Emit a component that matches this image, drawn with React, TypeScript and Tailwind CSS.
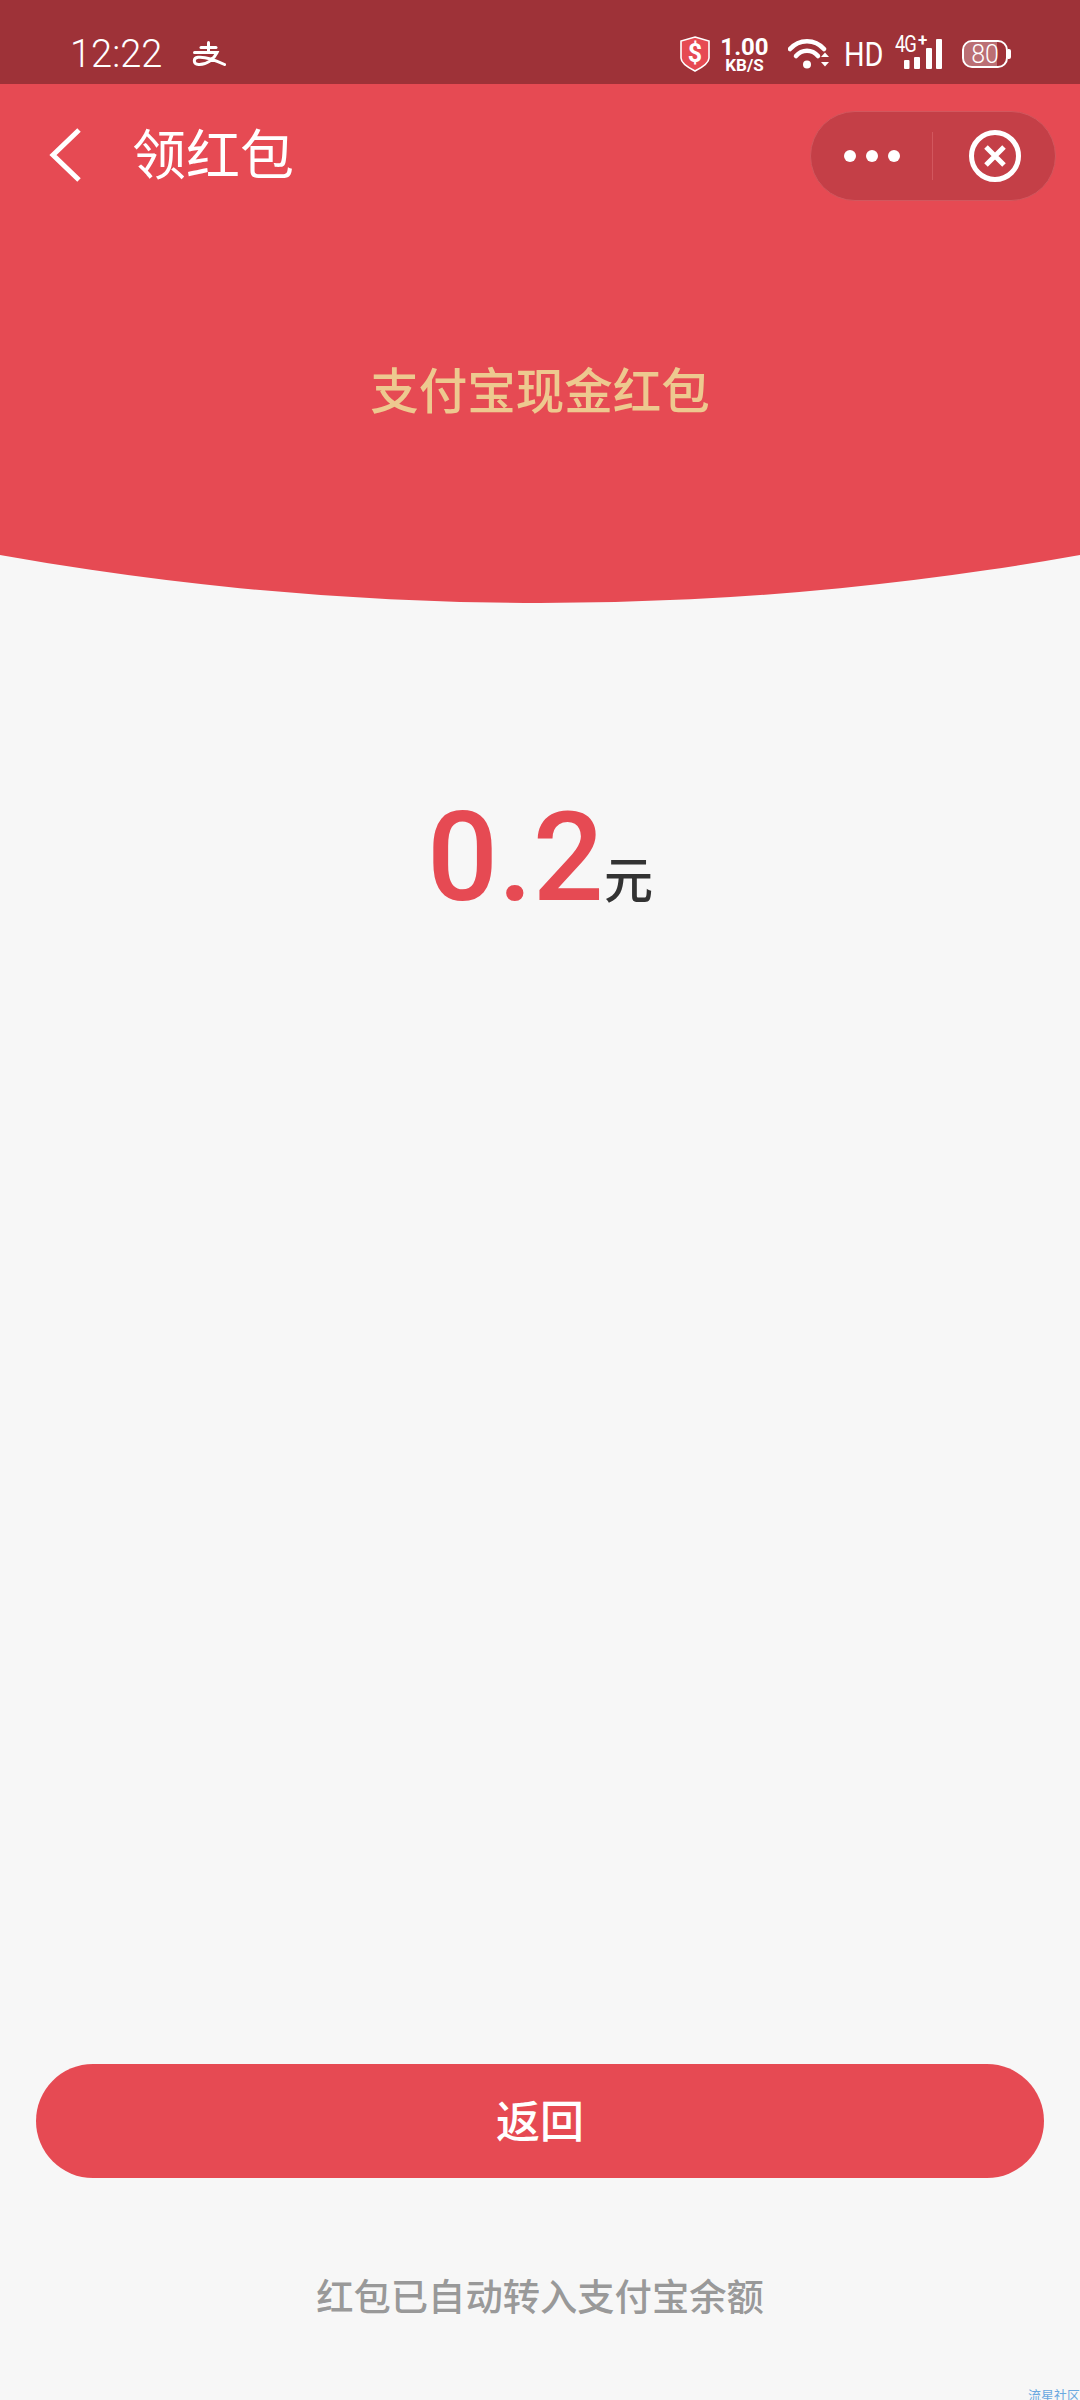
import React from "react";

const cjk = "font-['Noto_Sans_CJK_SC','Noto_Sans',sans-serif]";
const roboto = "font-['Roboto','Noto_Sans_CJK_SC',sans-serif]";

function Alipay() {
  return (
    <svg width="34" height="26" viewBox="0 0 34 26" fill="none" stroke="#fff" strokeWidth="3" strokeLinecap="round">
      <path d="M9 6.5H24" />
      <path d="M16.5 1.5V10" />
      <path d="M2.5 11.5H25C22 18 15 24 6.5 23.5C1 23 1 17 6 16.3C13 15.5 23 19 32.5 23.5" />
    </svg>
  );
}

function Shield() {
  return (
    <svg width="30" height="36" viewBox="0 0 30 36" className="mr-[11px]">
      <path d="M15 1L29 5V22C29 27 21 32 15 35C9 32 1 27 1 22V5Z" fill="#e64a53" stroke="#fff" strokeWidth="1.6" />
      <text x="15" y="26" textAnchor="middle" fill="#fff" fontSize="25" fontWeight="700" fontFamily="Roboto">$</text>
    </svg>
  );
}

function Wifi() {
  return (
    <svg width="42" height="32" viewBox="0 0 42 32" fill="none" stroke="#fff" strokeWidth="4.5" className="mr-[14px]">
      <path d="M2 11C11 0.5 27 0.5 36 11" strokeLinecap="round" />
      <path d="M8 18C14 11 24 11 30 18" strokeLinecap="round" />
      <circle cx="19" cy="26.5" r="4" fill="#fff" stroke="none" />
      <path d="M33 19L37 14.5L41 19Z" fill="#fff" stroke="none" />
      <path d="M33 24L37 28.5L41 24Z" fill="#fff" stroke="none" />
    </svg>
  );
}

function Signal() {
  return (
    <div className="relative w-[44px] h-[34px] mr-[20px]">
      <span className={`absolute left-[-3px] top-[-3px] text-[23px] leading-[22px] tracking-[-1.5px] scale-x-[0.8] origin-left text-white ${roboto}`}>4G</span>
      <span className={`absolute left-[20px] top-[-6px] text-[17px] leading-[18px] font-bold text-white ${roboto}`}>+</span>
      <svg width="44" height="32" viewBox="0 0 44 32" className="absolute left-0 top-[1px]" fill="#fff">
        <rect x="6" y="22" width="5.5" height="9" rx="1" />
        <rect x="16" y="19" width="6" height="12" rx="1" />
        <rect x="28" y="10" width="6" height="21" rx="1" />
        <rect x="38" y="1" width="6" height="30" rx="1" />
      </svg>
    </div>
  );
}

function Battery() {
  return (
    <div className="flex items-center">
      <div className="relative w-[46px] h-[28px] rounded-[10px] border-[2.5px] border-white overflow-hidden flex items-center justify-center">
        <div className="absolute left-0 top-0 bottom-0 w-[78%] bg-white/30" />
        <span className={`relative text-[25px] leading-none font-light text-white ${roboto}`}>80</span>
      </div>
      <div className="w-[3px] h-[10px] rounded-r-[2px] bg-white" />
    </div>
  );
}

export default function App() {
  return (
    <div className={`relative w-[1080px] h-[2400px] overflow-hidden bg-[#f7f7f7] flex flex-col ${cjk}`}>
      <header className="h-[603px] shrink-0 bg-[#e64a53] flex flex-col [clip-path:circle(3061px_at_50%_-2458px)]">
        <div className="h-[84px] shrink-0 bg-[#9e3238] pt-[24px] pl-[70px] pr-[69px] flex items-center">
          <span className={`text-[38px] leading-none font-light text-white mr-[30px] ${roboto}`}>12:22</span>
          <Alipay />
          <div className="ml-auto flex items-center">
            <Shield />
            <div className={`flex flex-col items-center w-[47px] mr-[20px] text-white font-bold ${roboto}`}>
              <span className="text-[24px] leading-[22px]">1.00</span>
              <span className="text-[17px] leading-[14px]">KB/S</span>
            </div>
            <Wifi />
            <span className={`text-[34px] leading-none font-normal text-white scale-x-[0.85] origin-left w-[36px] mr-[18px] ${roboto}`}>HD</span>
            <Signal />
            <Battery />
          </div>
        </div>
        <div className="pt-[27px] pl-[49px] pr-[24px] flex items-start">
          <svg width="32" height="54" viewBox="0 0 32 54" fill="none" stroke="#fff" strokeWidth="5" className="mt-[17px] mr-[51px]">
            <path d="M30 2L4 27L30 52" />
          </svg>
          <h1 className="text-[54px] leading-[81px] font-normal text-white">领红包</h1>
          <div className="ml-auto w-[246px] h-[90px] rounded-full bg-[#c43f47] border border-[#d2575e] flex items-center">
            <div className="w-[121px] flex items-center justify-end gap-[10px] pr-[32px]">
              <span className="w-[12px] h-[12px] rounded-full bg-white" />
              <span className="w-[12px] h-[12px] rounded-full bg-white" />
              <span className="w-[12px] h-[12px] rounded-full bg-white" />
            </div>
            <div className="w-px h-[48px] bg-[#d2575e]" />
            <div className="flex-1 flex items-center justify-center pl-[2px]">
              <svg width="54" height="54" viewBox="0 0 54 54" fill="none" stroke="#fff" strokeWidth="5">
                <circle cx="27" cy="27" r="23.5" />
                <path d="M18 18L36 36M36 18L18 36" />
              </svg>
            </div>
          </div>
        </div>
        <div className="mt-[152px] text-center text-[48.5px] leading-[70px] font-medium text-[#edc98f]">支付宝现金红包</div>
      </header>

      <div className="mt-[181px] flex justify-center items-baseline">
        <span className={`text-[125px] leading-[148px] font-medium text-[#e64a53] ${roboto}`}>0.2</span>
        <span className="text-[49px] leading-none text-[#333333] font-medium relative top-[-2px]">元</span>
      </div>

      <button className="mt-auto mx-[36px] h-[114px] pb-[5px] rounded-full bg-[#e64a53] text-white text-[44px] font-medium leading-none">返回</button>

      <p className="mt-[90px] mb-[78px] text-center text-[37.3px] leading-[54px] font-medium text-[#999999]">红包已自动转入支付宝余额</p>

      <span className="absolute right-0 bottom-[-3px] text-[13px] leading-[16px] text-[#6aa8e0]">流星社区</span>
    </div>
  );
}
